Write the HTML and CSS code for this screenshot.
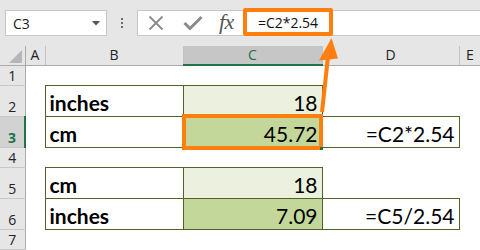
FILE: index.html
```html
<!DOCTYPE html>
<html>
<head>
<meta charset="utf-8">
<link rel="stylesheet" href="styles.css">
</head>
<body>
<div class="app">
  <div class="toolbar">
    <div class="namebox">
      <span class="ref">C3</span>
      <svg class="caret" width="8" height="5" viewBox="0 0 8 5"><path d="M0 0H8L4 4.5Z" fill="#555"/></svg>
    </div>
    <div class="dots"><i></i><i></i><i></i></div>
    <div class="fbar">
      <svg class="ico" width="16" height="16" viewBox="0 0 16 16"><path d="M1.5 1.5L14.5 14.5M14.5 1.5L1.5 14.5" stroke="#8a8a8a" stroke-width="1.8" fill="none"/></svg>
      <svg class="ico" width="20" height="16" viewBox="0 0 20 16"><path d="M1.5 8L7 13.5L18.5 2" stroke="#8a8a8a" stroke-width="3" fill="none"/></svg>
      <span class="fx">fx</span>
      <span class="formula">=C2*2.54</span>
    </div>
  </div>
  <div class="sheetwrap">
    <table class="grid">
      <colgroup>
        <col class="w-rh"><col class="w-a"><col class="w-b"><col class="w-c"><col class="w-d"><col class="w-e">
      </colgroup>
      <thead>
        <tr class="hdr">
          <th class="corner"><span class="tri"></span></th>
          <th class="ch">A</th><th class="ch">B</th><th class="ch sel">C</th><th class="ch">D</th><th class="ch">E</th>
        </tr>
      </thead>
      <tbody>
        <tr class="rs"><th class="rh">1</th><td></td><td></td><td></td><td></td><td></td></tr>
        <tr class="rl"><th class="rh">2</th><td></td><td class="bd lbl">inches</td><td class="bd num lt">18</td><td></td><td></td></tr>
        <tr class="rl"><th class="rh sel">3</th><td></td><td class="bd lbl">cm</td><td class="bd num dk">45.72</td><td class="bd num">=C2*2.54</td><td></td></tr>
        <tr class="rs"><th class="rh">4</th><td></td><td></td><td></td><td></td><td></td></tr>
        <tr class="rl"><th class="rh">5</th><td></td><td class="bd lbl">cm</td><td class="bd num lt">18</td><td></td><td></td></tr>
        <tr class="rl"><th class="rh">6</th><td></td><td class="bd lbl">inches</td><td class="bd num dk">7.09</td><td class="bd num">=C5/2.54</td><td></td></tr>
        <tr class="rs"><th class="rh">7</th><td></td><td></td><td></td><td></td><td></td></tr>
      </tbody>
    </table>
  </div>
  <div class="selbox"><span class="handle"></span></div>
  <svg class="arrow" width="480" height="250" viewBox="0 0 480 250">
    <path d="M322 112L328.5 52" stroke="#ff7f0e" stroke-width="4" fill="none"/>
    <path d="M331.5 38L319 60.5L338 58.5Z" fill="#ff7f0e"/>
  </svg>
</div>
</body>
</html>
```
FILE: styles.css
```css
* { box-sizing: border-box; }
html, body { margin: 0; padding: 0; background: #fff; }
.app { position: relative; width: 480px; height: 250px; overflow: hidden; }

.toolbar {
  height: 46px;
  background: #e6e6e6;
  display: flex;
  align-items: flex-start;
  padding-top: 10px;
  padding-left: 5px;
}
.namebox {
  width: 102px;
  height: 26px;
  background: #fff;
  border: 1px solid #c6c6c6;
  display: flex;
  align-items: center;
  justify-content: space-between;
  padding: 0 6px 0 7px;
  font-family: "Open Sans", "Noto Sans", sans-serif;
  font-size: 14px;
  color: #222;
}
.caret { margin-top: 1px; }
.dots {
  width: 30px;
  height: 26px;
  display: flex;
  flex-direction: column;
  align-items: center;
  justify-content: center;
  gap: 2px;
}
.dots i { display: block; width: 2px; height: 2px; background: #6b6b6b; }
.fbar {
  flex: 1;
  height: 26px;
  margin-right: -4px;
  background: #fff;
  border: 1px solid #c6c6c6;
  display: flex;
  align-items: center;
  padding-left: 10px;
}
.ico { flex: none; }
.fbar .ico:first-child { margin-right: 19px; }
.fbar .ico:nth-child(2) { margin-right: 16px; }
.fx {
  font-family: "Liberation Serif", serif;
  font-style: italic;
  font-size: 22px;
  color: #555;
  margin-top: -3px;
  letter-spacing: -0.5px;
}
.formula {
  margin-left: 9px;
  height: 28px;
  margin-top: -2px;
  border: 4px solid #ff7f0e;
  border-radius: 2px;
  padding: 0 11px 0 11px;
  display: flex;
  align-items: center;
  font-family: "Open Sans", "Noto Sans", sans-serif;
  font-size: 14px;
  color: #111;
  background: #fff;
}

.sheetwrap { background: #fff; }
.grid {
  border-collapse: collapse;
  table-layout: fixed;
  width: 481px;
}
.w-rh { width: 25px; }
.w-a { width: 20px; }
.w-b { width: 138px; }
.w-c { width: 139px; }
.w-d { width: 137px; }
.w-e { width: 22px; }

.grid th, .grid td { padding: 0; }

.hdr th {
  height: 19px;
  background: #e6e6e6;
  border-right: 1px solid #c3c3c3;
  border-bottom: 1px solid #ababab;
  font-family: "Open Sans", "Noto Sans", sans-serif;
  font-weight: normal;
  font-size: 14px;
  color: #222;
  text-align: center;
  vertical-align: middle;
  line-height: 18px;
}
.hdr th.sel {
  background: #c6c6c6;
  color: #217346;
  border-bottom: 2px solid #217346;
}
.corner { position: relative; border-right: 1px solid #ababab !important; }
.tri {
  position: absolute;
  right: 3px;
  bottom: 2px;
  width: 0; height: 0;
  border-left: 13px solid transparent;
  border-bottom: 13px solid #b6b6b6;
}

.rh {
  background: #e6e6e6;
  border-right: 1px solid #ababab;
  border-bottom: 1px solid #c8c8c8;
  font-family: "Open Sans", "Noto Sans", sans-serif;
  font-weight: normal;
  font-size: 14px;
  color: #222;
  text-align: center;
  vertical-align: bottom;
  line-height: 18px;
}
.rh.sel {
  background: #d2d2d2;
  color: #217346;
  font-weight: bold;
  border-right: 2px solid #217346;
}
.rs { height: 20px; }
.rl { height: 31px; }

.bd { border: 1px solid #4f6228; }
.grid td {
  font-family: Lato, "Liberation Sans", sans-serif;
  font-size: 21px;
  color: #000;
  vertical-align: bottom;
  line-height: 26px;
  white-space: nowrap;
}
.lbl { font-weight: bold; padding-left: 4px !important; }
.num { text-align: right; padding-right: 4px !important; }
.lt { background: #ebf1de; }
.dk { background: #c4d79b; }

.selbox {
  position: absolute;
  left: 182px;
  top: 114px;
  width: 141px;
  height: 36px;
  border: 4px solid #ff7f0e;
}
.handle {
  position: absolute;
  right: -4px;
  bottom: -4px;
  width: 3px; height: 3px;
  background: #217346;
}
.arrow { position: absolute; left: 0; top: 0; pointer-events: none; }
```
